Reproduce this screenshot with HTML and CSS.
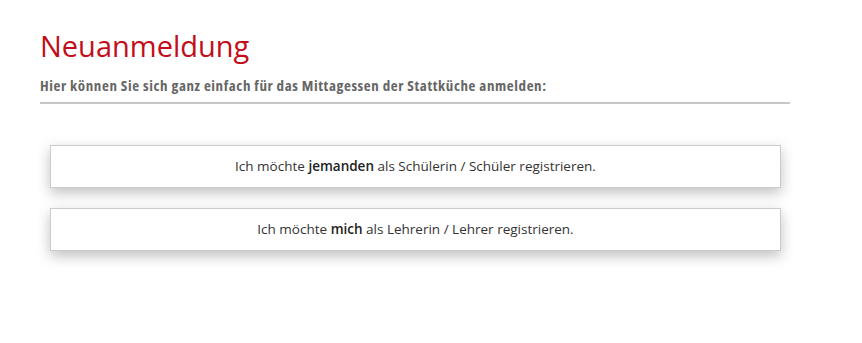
FILE: index.html
```html
<!DOCTYPE html>
<html lang="de">
<head>
    <meta charset="UTF-8">
    <title>Neuanmeldung</title>
    <link rel="stylesheet" href="styles.css">
</head>
<body>
<div class="page">
    <h1>Neuanmeldung</h1>
    <p class="intro">Hier können Sie sich ganz einfach für das Mittagessen der Stattküche anmelden:</p>
    <div class="choices">
        <a class="choice" href="#">Ich möchte <b>jemanden</b> als Schülerin / Schüler registrieren.</a>
        <a class="choice" href="#">Ich möchte <b>mich</b> als Lehrerin / Lehrer registrieren.</a>
    </div>
</div>
</body>
</html>
```

FILE: styles.css
```css
body {
    margin: 0;
    font-family: 'Open Sans', sans-serif;
    background: #fff;
    color: #333;
}

.page {
    width: 750px;
    padding: 28px 0 60px 40px;
}

.page h1 {
    margin: 0;
    font-family: 'Open Sans', sans-serif;
    font-weight: 400;
    font-size: 29px;
    line-height: 36px;
    color: #c20e1a;
}

.intro {
    margin: 12px 0 0;
    padding-bottom: 8px;
    border-bottom: 2px solid #c8c8c8;
    font-family: 'Open Sans', sans-serif;
    font-stretch: 85%;
    font-weight: 700;
    font-size: 15px;
    letter-spacing: 0.6px;
    line-height: 18px;
    color: #666;
}

.choices {
    display: flex;
    flex-direction: column;
    gap: 20px;
    margin: 41px 9px 0 10px;
}

.choice {
    display: block;
    height: 41px;
    line-height: 41px;
    border: 1px solid #ccc;
    background: #fff;
    box-shadow: 0 5px 14px rgba(0, 0, 0, 0.25);
    text-align: center;
    text-decoration: none;
    font-size: 13.5px;
    color: #333;
}

.choice b {
    font-weight: 600;
    color: #222;
}
```
